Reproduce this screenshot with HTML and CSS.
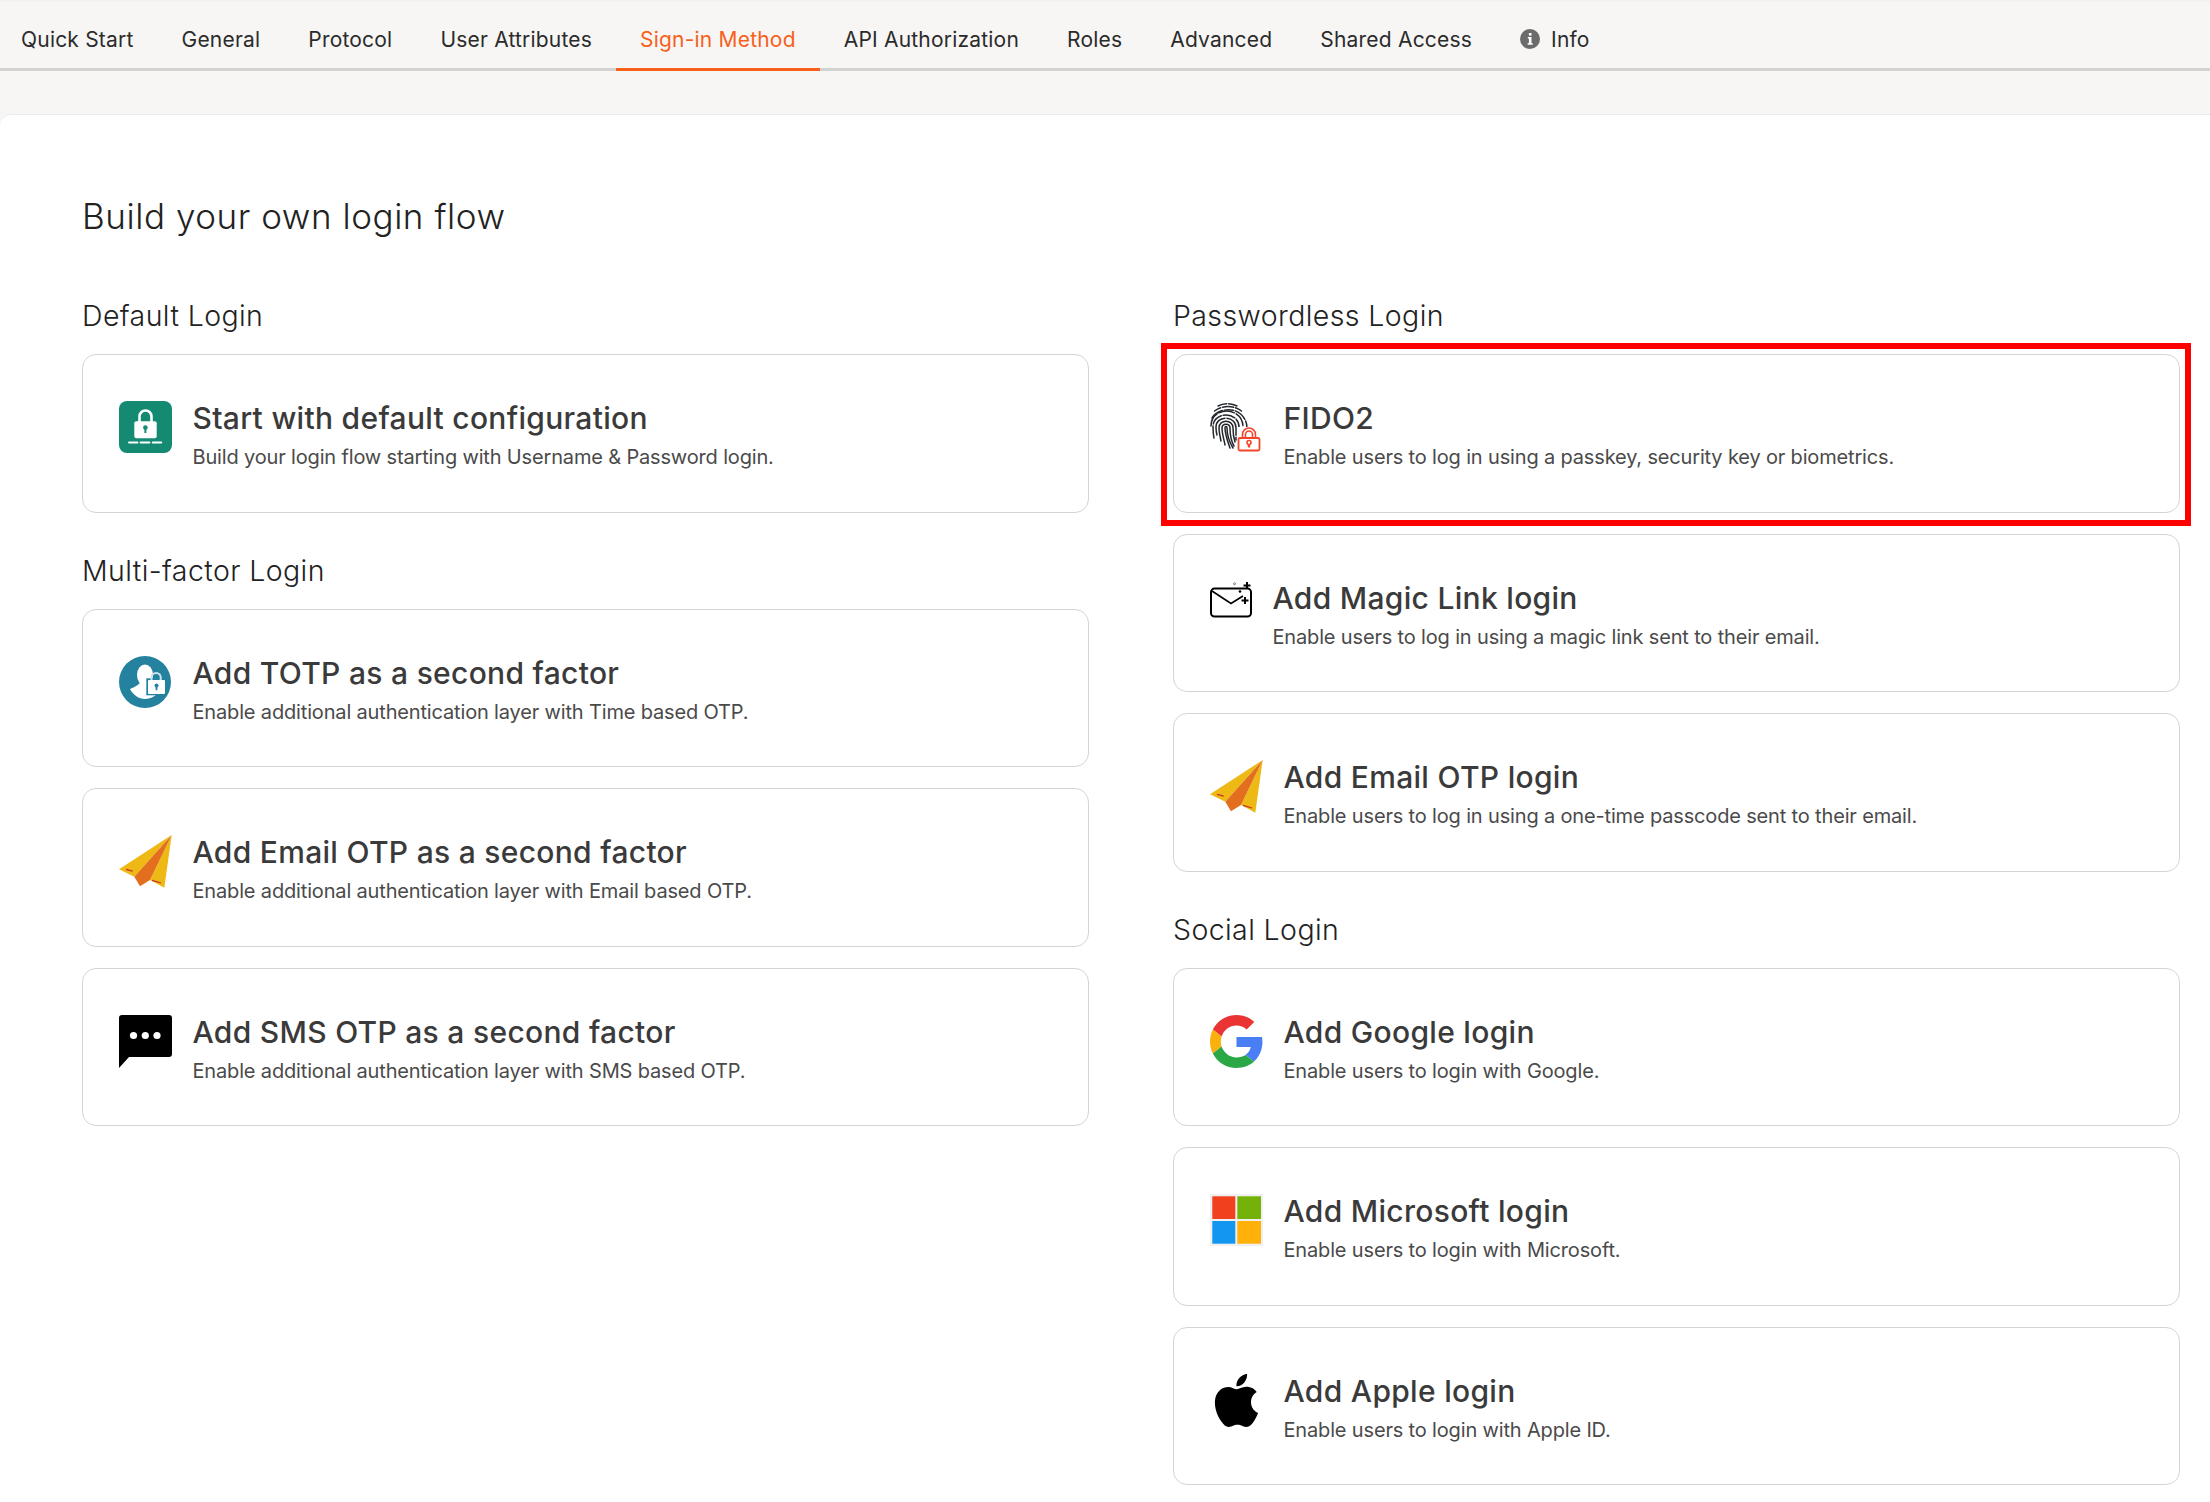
FILE: index.html
```html
<!DOCTYPE html>
<html lang="en">
  <head>
    <meta charset="utf-8">
    <title>Sign-in Method</title>
    <link rel="stylesheet" href="styles.css">
  </head>

  <body>
    <nav class="tabs">
      <a class="tab">Quick Start</a>
      <a class="tab">General</a>
      <a class="tab">Protocol</a>
      <a class="tab">User Attributes</a>
      <a class="tab active">Sign-in Method</a>
      <a class="tab">API Authorization</a>
      <a class="tab">Roles</a>
      <a class="tab">Advanced</a>
      <a class="tab">Shared Access</a>
      <a class="tab">
        <svg class="info-icon" viewBox="0 0 20 20">
          <circle cx="10" cy="10" r="10" fill="#6b6b6b"/>
          <rect x="8.9" y="4" width="2.6" height="2.6" fill="#fff"/>
          <path d="M7.8 8h3.7v6.2h1.2v1.6H7.6v-1.6h1.3V9.6H7.8z" fill="#fff"/>
        </svg>
        Info
      </a>
    </nav>

    <main class="panel">
      <h1>Build your own login flow</h1>
      <div class="columns">
        <div class="column">
          <section>
            <h3>Default Login</h3>
            <div class="card">
              <svg class="icon" viewBox="0 0 53 53">
                <rect width="53" height="52" rx="8" fill="#148a73"/>
                <path d="M20.5 21v-5.5a6 6 0 0 1 12 0V21" fill="none" stroke="#fff" stroke-width="2.6"/>
                <rect x="15.3" y="20.3" width="22.4" height="17" rx="2" fill="#fff"/>
                <circle cx="26.4" cy="26.6" r="2.3" fill="#148a73"/>
                <rect x="25.4" y="27" width="2" height="5" fill="#148a73"/>
                <path d="M10 41.5h8.5M21.500 41.5h9M33.700 41.5h8.600" stroke="#fff" stroke-width="1.8" stroke-linecap="round"/>
              </svg>
              <div>
                <div class="card-title">Start with default configuration</div>
                <div class="card-desc">Build your login flow starting with Username &amp; Password login.</div>
              </div>
            </div>
          </section>

          <section>
            <h3>Multi-factor Login</h3>
            <div class="card-list">
              <div class="card">
                <svg class="icon" viewBox="0 0 53 53">
                  <circle cx="26" cy="26" r="26" fill="#24829f"/>
                  <ellipse cx="26" cy="19" rx="8" ry="10.5" fill="#fff"/>
                  <path d="M11 33c5-2 8-4 10-6h10c3 3 7 4 11 6-3 6-10 10-16 10s-12-4-15-10z" fill="#fff"/>
                  <rect x="27.3" y="22.3" width="19" height="17" fill="#24829f"/>
                  <path d="M32.5 25v-3.5a4.6 4.6 0 0 1 9.2 0V25" fill="none" stroke="#c9e3ea" stroke-width="2"/>
                  <rect x="29" y="24" width="17" height="14" rx="1" fill="#fff"/>
                  <circle cx="37.5" cy="29.4" r="2" fill="#24829f"/>
                  <rect x="36.6" y="30" width="1.8" height="4.2" fill="#24829f"/>
                </svg>
                <div>
                  <div class="card-title">Add TOTP as a second factor</div>
                  <div class="card-desc">Enable additional authentication layer with Time based OTP.</div>
                </div>
              </div>
              <div class="card">
                <svg class="icon" viewBox="0 0 53 53">
                  <path d="M52.7 0 0 34.3l15.3 7.4z" fill="#eeb815"/>
                  <path d="M52.7 0 31 45l14.3 7.7z" fill="#eeb815"/>
                  <path d="M52.7 0 15.3 41.7 21 51.3 31 45z" fill="#e36e1e"/>
                  <path d="M7 34.3l6.7 1.8M33 45.3l9 2.7" stroke="#c9342a" stroke-width="1.3"/>
                </svg>
                <div>
                  <div class="card-title">Add Email OTP as a second factor</div>
                  <div class="card-desc">Enable additional authentication layer with Email based OTP.</div>
                </div>
              </div>
              <div class="card">
                <svg class="icon" viewBox="0 0 53 53">
                  <path d="M3 0h47a3 3 0 0 1 3 3v36a3 3 0 0 1-3 3H10L0 53V3a3 3 0 0 1 3-3z" fill="#000"/>
                  <circle cx="14.5" cy="20.5" r="3.6" fill="#fff"/>
                  <circle cx="26.3" cy="20.5" r="3.6" fill="#fff"/>
                  <circle cx="38" cy="20.5" r="3.6" fill="#fff"/>
                </svg>
                <div>
                  <div class="card-title">Add SMS OTP as a second factor</div>
                  <div class="card-desc">Enable additional authentication layer with SMS based OTP.</div>
                </div>
              </div>
            </div>
          </section>
        </div>

        <div class="column">
          <section>
            <h3>Passwordless Login</h3>
            <div class="card-list">
              <div class="card highlighted">
                <svg class="icon" viewBox="0 0 53 53">
                  <g fill="none" stroke="#23272b" stroke-width="1.5" stroke-linecap="round">
                    <path d="M8 5c6-3 13-3 19 0" stroke-dasharray="9 2"/>
                    <path d="M4.5 10c8-6 19-6 27 0" stroke-dasharray="7 2 11 2"/>
                    <path d="M2 17c6-10 25-12 32 0 2 3 3 6 3 10" stroke-dasharray="13 2 9 2"/>
                    <path d="M1 25c0-20 32-20 32 1v4" stroke-dasharray="14 2 16 2"/>
                    <path d="M4 37c-1-4-1-7-1-11 0-16 26-16 26 0v8" stroke-dasharray="12 2"/>
                    <path d="M7 34c-1-3-1-5-1-8 0-12 20-12 20 1v12" stroke-dasharray="22 2"/>
                    <path d="M11 40c-1-5-2-9-2-13 0-9 14-9 14 0 0 6 1 11 2 14"/>
                    <path d="M15 44c-1-6-3-11-3-17 0-5 8-5 8 0 0 7 1 13 4 18"/>
                    <path d="M20 47c-2-6-5-13-5-20 0-2 2-2 2 0 0 8 3 15 6 20"/>
                  </g>
                  <rect x="27" y="26" width="26" height="25" fill="#fff"/>
                  <path d="M32.500 37v-3.500a6.500 6.500 0 0 1 13 0V37M35.500 37v-3.500a3.500 3.500 0 0 1 7 0V37" fill="none" stroke="#f4452a" stroke-width="1.6"/>
                  <rect x="28.500" y="37" width="21" height="12.500" rx="1.500" fill="#fff" stroke="#f4452a" stroke-width="1.800"/>
                  <circle cx="39" cy="41.500" r="2" fill="none" stroke="#f4452a" stroke-width="1.600"/>
                  <path d="M39 43.500v3" stroke="#f4452a" stroke-width="2.400"/>
                </svg>
                <div>
                  <div class="card-title">FIDO2</div>
                  <div class="card-desc">Enable users to log in using a passkey, security key or biometrics.</div>
                </div>
              </div>
              <div class="card">
                <svg class="icon magic" viewBox="0 0 42 36">
                  <rect x="1" y="6.6" width="40" height="28" rx="3.5" fill="#fff" stroke="#000" stroke-width="2"/>
                  <path d="M2 9l19 12.5L33 14" fill="none" stroke="#000" stroke-width="1.6"/>
                  <rect x="36" y="0" width="2" height="7" fill="#000"/>
                  <rect x="33.5" y="2.5" width="7" height="2" fill="#000"/>
                  <rect x="34" y="15" width="2" height="7" fill="#000"/>
                  <rect x="31.5" y="17.500" width="7" height="2" fill="#000"/>
                  <circle cx="30" cy="9.500" r="1.300" fill="#000"/>
                  <circle cx="24.500" cy="1.800" r="1" fill="none" stroke="#555" stroke-width=".7"/>
                </svg>
                <div>
                  <div class="card-title">Add Magic Link login</div>
                  <div class="card-desc">Enable users to log in using a magic link sent to their email.</div>
                </div>
              </div>
              <div class="card">
                <svg class="icon" viewBox="0 0 53 53">
                  <path d="M52.7 0 0 34.3l15.3 7.4z" fill="#eeb815"/>
                  <path d="M52.7 0 31 45l14.3 7.7z" fill="#eeb815"/>
                  <path d="M52.7 0 15.3 41.7 21 51.3 31 45z" fill="#e36e1e"/>
                  <path d="M7 34.3l6.7 1.8M33 45.3l9 2.7" stroke="#c9342a" stroke-width="1.3"/>
                </svg>
                <div>
                  <div class="card-title">Add Email OTP login</div>
                  <div class="card-desc">Enable users to log in using a one-time passcode sent to their email.</div>
                </div>
              </div>
            </div>
          </section>

          <section>
            <h3>Social Login</h3>
            <div class="card-list">
              <div class="card">
                <svg class="icon" viewBox="0 0 48 48">
                  <path fill="#ea3434" d="M24 9.500c3.540 0 6.710 1.220 9.210 3.600l6.850-6.850C35.900 2.380 30.470 0 24 0 14.620 0 6.510 5.380 2.560 13.220l7.980 6.190C12.430 13.720 17.740 9.500 24 9.500z"/>
                  <path fill="#4a7ef5" d="M47.500 24.550c0-1.570-.15-3.090-.38-4.550H24v9.020h12.940c-.58 2.960-2.260 5.480-4.780 7.180l7.730 6c4.510-4.180 7.610-10.360 7.610-17.650z"/>
                  <path fill="#f9b10f" d="M10.530 28.590c-.48-1.450-.76-2.990-.76-4.590s.27-3.140.76-4.590l-7.980-6.190C.92 16.460 0 20.120 0 24c0 3.880.92 7.540 2.560 10.780l7.970-6.190z"/>
                  <path fill="#2aa846" d="M24 48c6.480 0 11.930-2.130 15.890-5.810l-7.730-6c-2.150 1.450-4.920 2.300-8.160 2.300-6.260 0-11.570-4.220-13.470-9.910l-7.980 6.190C6.510 42.620 14.620 48 24 48z"/>
                </svg>
                <div>
                  <div class="card-title">Add Google login</div>
                  <div class="card-desc">Enable users to login with Google.</div>
                </div>
              </div>
              <div class="card">
                <svg class="icon" viewBox="0 0 53 53">
                  <rect width="53" height="52" fill="#f0f0f0"/>
                  <rect x="2.300" y="2.300" width="23" height="22.700" fill="#f1401e"/>
                  <rect x="27.300" y="2.300" width="23.700" height="22.700" fill="#74b20a"/>
                  <rect x="2.300" y="27" width="23" height="22.700" fill="#1296ef"/>
                  <rect x="27.300" y="27" width="23.700" height="22.700" fill="#ffb10a"/>
                </svg>
                <div>
                  <div class="card-title">Add Microsoft login</div>
                  <div class="card-desc">Enable users to login with Microsoft.</div>
                </div>
              </div>
              <div class="card">
                <svg class="icon" viewBox="0 0 30 30">
                  <path fill="#000" transform="scale(1.250)" d="M12.152 6.896c-.948 0-2.415-1.078-3.960-1.040-2.040.027-3.910 1.183-4.961 3.014-2.117 3.675-.546 9.103 1.519 12.090 1.013 1.454 2.208 3.090 3.792 3.039 1.520-.065 2.090-.987 3.935-.987 1.831 0 2.350.987 3.960.948 1.637-.026 2.676-1.480 3.676-2.948 1.156-1.688 1.636-3.325 1.662-3.415-.039-.013-3.182-1.221-3.220-4.857-.026-3.040 2.480-4.494 2.597-4.559-1.429-2.090-3.623-2.324-4.390-2.376-2-.156-3.675 1.090-4.610 1.090zM15.530 3.830c.843-1.012 1.400-2.427 1.245-3.830-1.207.052-2.662.805-3.532 1.818-.780.896-1.454 2.338-1.273 3.714 1.338.104 2.715-.688 3.559-1.701"/>
                </svg>
                <div>
                  <div class="card-title">Add Apple login</div>
                  <div class="card-desc">Enable users to login with Apple ID.</div>
                </div>
              </div>
            </div>
          </section>
        </div>
      </div>
    </main>
  </body>
</html>
```

FILE: styles.css
```css
* {
  box-sizing: border-box;
}

html, body {
  height: 100%;
}

body {
  margin: 0;
  display: flex;
  flex-direction: column;
  overflow: hidden;
  background: #f7f6f5;
  color: #222;
  font-family: "Inter", "Liberation Sans", sans-serif;
}

.tabs {
  display: flex;
  height: 71px;
  padding-left: 0;
  border-top: 2px solid #f1f1f1;
  border-bottom: 3px solid #d2d2d2;
}

.tab {
  display: flex;
  align-items: center;
  gap: 11px;
  height: 69px;
  padding: 9px 24px 0;
  margin-bottom: -3px;
  font-size: 21px;
  letter-spacing: 0.2px;
  border-bottom: 3px solid transparent;
  color: #2b2b2b;
}

.tab:first-child {
  padding-left: 21px;
}

.tab.active {
  color: #f7601b;
  border-bottom-color: #f7601b;
}

.info-icon {
  width: 20px;
  height: 20px;
  margin-top: -2px;
}

.panel {
  flex: 1;
  margin-top: 43px;
  padding: 79px 30px 0 82px;
  background: #fff;
  border: 1px solid #ebebeb;
  border-width: 1px 0 0;
  border-radius: 12px 0 0 0;
}

h1 {
  margin: 0 0 59px;
  font-size: 35px;
  line-height: 44px;
  font-weight: 300;
  letter-spacing: 0.55px;
}

h3 {
  margin: 0 0 19px;
  font-size: 28.5px;
  line-height: 38px;
  font-weight: 300;
  letter-spacing: 0.4px;
}

.columns {
  display: grid;
  grid-template-columns: 1007px 1007px;
  column-gap: 84px;
}

.column {
  display: flex;
  flex-direction: column;
  gap: 39px;
}

.card-list {
  display: flex;
  flex-direction: column;
  gap: 21px;
}

.card {
  position: relative;
  display: flex;
  align-items: flex-start;
  height: 158.5px;
  padding: 44px 0 0 36px;
  background: #fff;
  border: 1.5px solid #d4d4d4;
  border-radius: 14px;
}

.highlighted::after {
  content: "";
  position: absolute;
  top: -12px;
  left: -13px;
  right: -12px;
  bottom: -14px;
  border: 6px solid #f00;
}

.icon {
  flex: none;
  width: 53px;
  height: 53px;
  margin: 2px 20.5px 0 0;
}

.icon.magic {
  width: 42px;
  height: 36px;
  margin: 3px 20.5px 0 0;
}

.card-title {
  font-size: 30px;
  line-height: 38px;
  font-weight: 500;
  color: #3a3a3a;
  letter-spacing: 0.3px;
}

.card-desc {
  margin-top: 6px;
  font-size: 20px;
  line-height: 28px;
  color: #4a4a4a;
  letter-spacing: -0.16px;
}
```
